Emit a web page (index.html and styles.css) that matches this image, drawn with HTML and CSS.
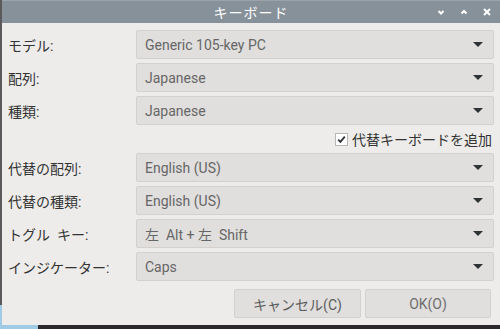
FILE: index.html
```html
<!DOCTYPE html>
<html lang="ja">
<head>
<meta charset="utf-8">
<link rel="stylesheet" href="styles.css">
</head>
<body>
<div class="window">
  <div class="titlebar">
    <span class="title">キーボード</span>
    <div class="tb-buttons">
      <svg class="tb-icon" viewBox="0 0 10 10"><path d="M2.5 4 L5 6.5 L7.5 4" /></svg>
      <svg class="tb-icon" viewBox="0 0 10 10"><path d="M2.5 6.5 L5 4 L7.5 6.5" /></svg>
      <svg class="tb-icon" viewBox="0 0 10 10"><path d="M2 2 L8 8 M8 2 L2 8" /></svg>
    </div>
  </div>
  <div class="content">
    <div class="form">
      <div class="label">モデル:</div>
      <div class="combo"><span>Generic 105-key PC</span><i class="arrow"></i></div>
      <div class="label">配列:</div>
      <div class="combo"><span>Japanese</span><i class="arrow"></i></div>
      <div class="label">種類:</div>
      <div class="combo"><span>Japanese</span><i class="arrow"></i></div>
    </div>
    <div class="check-row">
      <span class="checkbox"><svg viewBox="0 0 11 11"><path d="M2.2 5.6 L4.4 7.8 L8.8 2.6" /></svg></span>
      <span class="check-label">代替キーボードを追加</span>
    </div>
    <div class="form">
      <div class="label">代替の配列:</div>
      <div class="combo"><span>English (US)</span><i class="arrow"></i></div>
      <div class="label">代替の種類:</div>
      <div class="combo"><span>English (US)</span><i class="arrow"></i></div>
      <div class="label">トグル&nbsp;&nbsp;キー:</div>
      <div class="combo"><span>左&nbsp;&nbsp;Alt + 左&nbsp;&nbsp;Shift</span><i class="arrow"></i></div>
      <div class="label">インジケーター:</div>
      <div class="combo"><span>Caps</span><i class="arrow"></i></div>
    </div>
    <div class="buttons">
      <button class="btn">キャンセル(C)</button>
      <button class="btn ok">OK(O)</button>
    </div>
  </div>
</div>
</body>
</html>
```

FILE: styles.css
```css
html, body {
  margin: 0;
  padding: 0;
}
body {
  width: 500px;
  height: 329px;
  overflow: hidden;
  font-family: Roboto, "Noto Sans CJK JP", sans-serif;
  font-size: 14px;
  background:
    linear-gradient(#5a5a5c 0 305px, transparent 305px) left top / 2px 100% no-repeat,
    linear-gradient(to right, #9fcbe6 0 38px, #2c282b 38px);
}
.window {
  margin-left: 2px;
  width: 498px;
  height: 325px;
  background: #edecea;
  display: flex;
  flex-direction: column;
}
.titlebar {
  height: 23px;
  background: #87919a;
  border-top: 1px solid #9aa3ab;
  box-sizing: border-box;
  position: relative;
  display: flex;
  align-items: center;
  justify-content: center;
}
.title {
  color: #ffffff;
  font-family: "Noto Sans CJK JP", sans-serif;
  font-size: 14px;
  letter-spacing: 1px;
}
.tb-buttons {
  position: absolute;
  right: 8px;
  top: 6px;
  display: flex;
  gap: 13px;
}
.tb-icon {
  width: 10px;
  height: 10px;
  fill: none;
  stroke: #ffffff;
  stroke-width: 2;
}
.content {
  padding: 7px 4px 0 6px;
  display: flex;
  flex-direction: column;
}
.form {
  display: grid;
  grid-template-columns: 128px 358px;
  row-gap: 4px;
  align-items: center;
}
.label {
  color: #333333;
}
.combo {
  height: 29px;
  box-sizing: border-box;
  background: #e0dfdd;
  border: 1px solid #d2d1cf;
  border-radius: 2px;
  display: flex;
  align-items: center;
  justify-content: space-between;
  padding: 0 10px 0 8px;
  color: #666666;
}
.arrow {
  width: 0;
  height: 0;
  border-left: 5px solid transparent;
  border-right: 5px solid transparent;
  border-top: 5px solid #2e3436;
}
.check-row {
  height: 20px;
  margin: 4px 0;
  display: flex;
  align-items: center;
  justify-content: flex-end;
  padding-right: 4px;
  gap: 4px;
}
.checkbox {
  width: 11px;
  height: 11px;
  background: #ffffff;
  border: 1px solid #b8b7b5;
  display: flex;
}
.checkbox svg {
  width: 11px;
  height: 11px;
  fill: none;
  stroke: #2e3436;
  stroke-width: 1.8;
}
.check-label {
  color: #333333;
  font-family: "Noto Sans CJK JP", sans-serif;
}
.buttons {
  display: flex;
  justify-content: flex-end;
  gap: 4px;
  margin-top: 8px;
  padding-right: 5px;
}
.btn {
  width: 127px;
  height: 29px;
  background: #e0dfdd;
  border: 1px solid #d2d1cf;
  border-radius: 2px;
  font-family: Roboto, "Noto Sans CJK JP", sans-serif;
  font-size: 14px;
  color: #5c5c5c;
  padding: 0;
}
.btn.ok {
  width: 126px;
  color: #6e6e6e;
}
```
